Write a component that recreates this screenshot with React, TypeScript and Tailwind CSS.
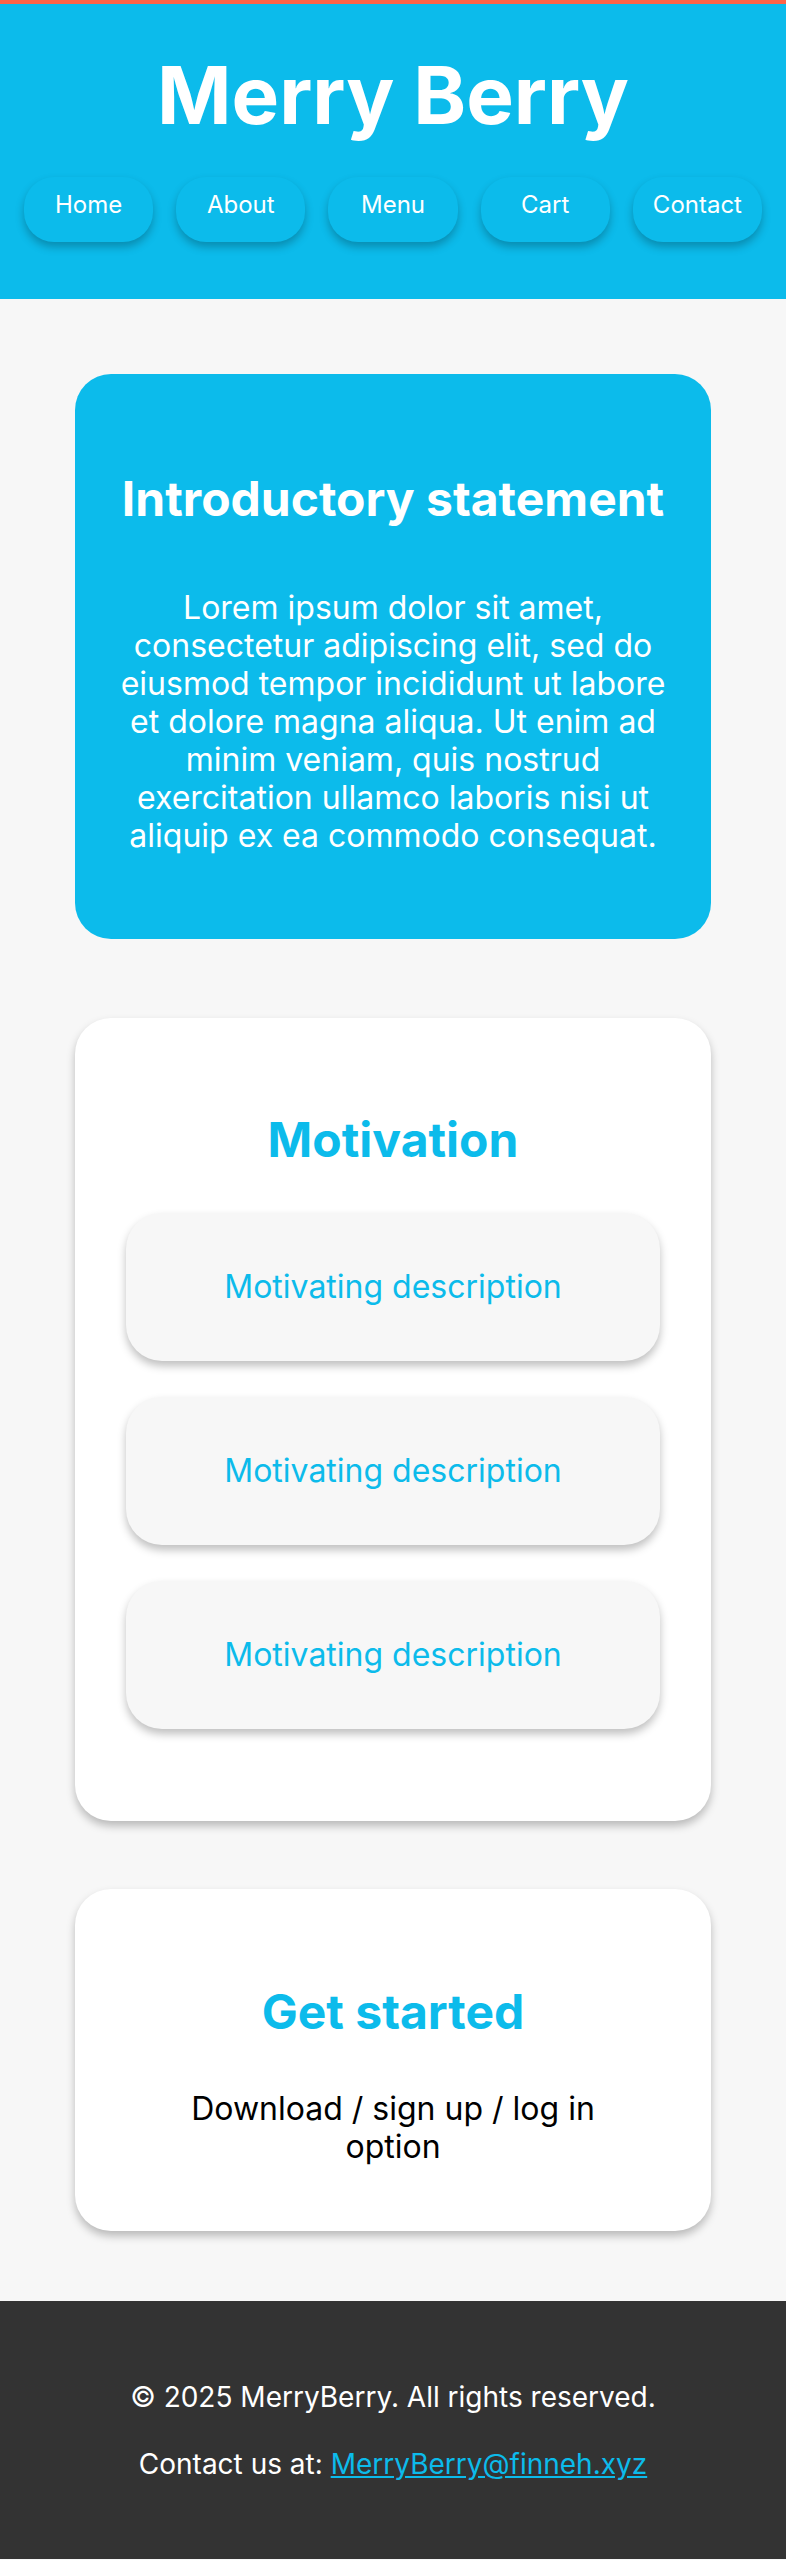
const navItems = ['Home', 'About', 'Menu', 'Cart', 'Contact']

function Header() {
  return (
    <header className="border-t-4 border-[#ff6347] bg-[#0cbbeb] pt-[42px] pb-[57px] text-white">
      <h1 className="text-center text-[80px] leading-[97px] font-bold">Merry Berry</h1>
      <nav className="mt-[34px] flex gap-[23px] px-6">
        {navItems.map(item => (
          <a
            key={item}
            href="#"
            className="h-[65px] flex-1 rounded-[30px] bg-[#0cbbeb] pt-[13px] text-center text-[24px] leading-[29px] shadow-[0_5px_8px_rgba(0,0,0,0.25)]"
          >
            {item}
          </a>
        ))}
      </nav>
    </header>
  )
}

function MotivationCard() {
  return (
    <div className="mb-9 last:mb-0 mx-auto w-[534px] rounded-[36px] bg-[#f7f7f7] py-[55px] text-center text-[32px] leading-[38px] text-[#0cbbeb] shadow-[0_5px_8px_rgba(0,0,0,0.25)]">
      Motivating description
    </div>
  )
}

export default function App() {
  return (
    <div className="min-h-screen bg-[#f7f7f7] font-[family-name:Inter,sans-serif]">
      <Header />

      <main className="px-[75px] pt-[75px] pb-[70px]">
        {/* Intro */}
        <section className="mx-auto w-[636px] rounded-[36px] bg-[#0cbbeb] px-[35px] pt-[96px] pb-[84px] text-center text-white">
          <h2 className="text-[48px] leading-[58px] font-bold">Introductory statement</h2>
          <p className="mt-[61px] text-[32px] leading-[38px]">
            Lorem ipsum dolor sit amet, consectetur adipiscing elit, sed do eiusmod tempor incididunt ut
            labore et dolore magna aliqua. Ut enim ad minim veniam, quis nostrud exercitation ullamco
            laboris nisi ut aliquip ex ea commodo consequat.
          </p>
        </section>

        {/* Motivation */}
        <section className="mx-auto mt-[79px] w-[636px] rounded-[36px] bg-white pt-[93px] pb-[92px] shadow-[0_5px_8px_rgba(0,0,0,0.25)]">
          <h2 className="text-center text-[48px] leading-[58px] font-bold text-[#0cbbeb]">Motivation</h2>
          <div className="mt-[44px]">
            <MotivationCard />
            <MotivationCard />
            <MotivationCard />
          </div>
        </section>

        {/* Get started */}
        <section className="mx-auto mt-[68px] w-[636px] rounded-[36px] bg-white pt-[94px] pb-[65px] text-center shadow-[0_5px_8px_rgba(0,0,0,0.25)]">
          <h2 className="text-[48px] leading-[58px] font-bold text-[#0cbbeb]">Get started</h2>
          <p className="mx-auto mt-[49px] max-w-[450px] text-[32px] leading-[38px] text-black">
            Download / sign up / log in option
          </p>
        </section>
      </main>

      <footer className="bg-[#333333] pt-[79px] pb-[78px] text-center text-[28px] leading-[34px] text-white">
        <p>© 2025 MerryBerry. All rights reserved.</p>
        <p className="mt-[33px]">
          Contact us at:{' '}
          <a href="#" className="text-[#0cbbeb] underline">
            MerryBerry@finneh.xyz
          </a>
        </p>
      </footer>
    </div>
  )
}
